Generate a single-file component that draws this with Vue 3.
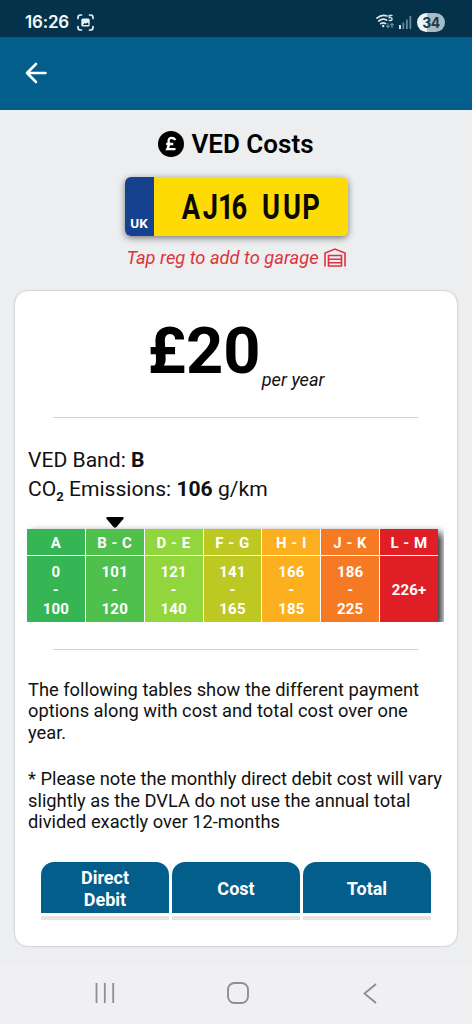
<script setup>
const bands = [
  { name: 'A', range: ['0', '-', '100'], color: '#36b554' },
  { name: 'B - C', range: ['101', '-', '120'], color: '#50c04d' },
  { name: 'D - E', range: ['121', '-', '140'], color: '#91d63c' },
  { name: 'F - G', range: ['141', '-', '165'], color: '#bec822' },
  { name: 'H - I', range: ['166', '-', '185'], color: '#fcb01f' },
  { name: 'J - K', range: ['186', '-', '225'], color: '#f67a24' },
  { name: 'L - M', range: ['226+'], color: '#e01e26' },
]
const columns = ['Direct Debit', 'Cost', 'Total']
</script>

<template>
  <div class="screen">
    <div class="status">
      <span class="time">16:26</span>
      <svg class="shot" width="17" height="17" viewBox="0 0 17 17" fill="none" stroke="#e8f1f6" stroke-width="1.7" stroke-linecap="round">
        <path d="M1 4.5V3.5Q1 1 3.5 1H4.5M12.500 1h1Q16 1 16 3.500v1M16 12.500v1Q16 16 13.500 16h-1M4.500 16h-1Q1 16 1 13.500v-1" />
        <rect x="4.300" y="4.600" width="8.400" height="7.800" rx="1.500" fill="#e8f1f6" stroke="none" />
        <path d="M5.800 11l2-2 1.200.8 1.200-1.300 1.300 1.300V11z" fill="#04324b" stroke="none" />
      </svg>
      <svg class="wifi" width="18" height="16" viewBox="0 0 18 16" fill="none" stroke="#dbe6ec" stroke-width="1.700" stroke-linecap="round">
        <path d="M1 4.200Q5.500.2 11 2M2.800 7Q6.500 4 10.500 6M4.800 9.700Q7 8 9.500 9.500" />
        <circle cx="7.200" cy="12" r="1.200" fill="#dbe6ec" stroke="none" />
        <path d="M16 1.500h-2.800v2.200q2.900-.5 2.900 1.400 0 1.900-3 1.200" stroke-width="1.300" />
        <path d="M12 9.500v4m-1.300-1.300L12 13.500l1.300-1.300M16 13.500v-4m-1.300 1.300L16 9.500l1.300 1.300" stroke="#7894a3" stroke-width="1.100" />
      </svg>
      <svg class="signal" width="13" height="13" viewBox="0 0 13 13">
        <rect x="0" y="9" width="2" height="4" fill="#dbe6ec" />
        <rect x="3.500" y="6.500" width="1.700" height="6.500" fill="#6f8c9b" />
        <rect x="7" y="3.500" width="1.700" height="9.500" fill="#6f8c9b" />
        <rect x="10.500" y="0" width="1.700" height="13" fill="#6f8c9b" />
      </svg>
      <span class="battery">34</span>
    </div>

    <header class="appbar">
      <svg width="22" height="22" viewBox="0 0 22 22" fill="none" stroke="#fff" stroke-width="2.600" stroke-linecap="round" stroke-linejoin="round">
        <path d="M20.500 11H2M11 2L2 11l9 9" />
      </svg>
    </header>

    <main class="content">
      <h1 class="title">
        <svg width="26" height="26" viewBox="0 0 26 26">
          <circle cx="13" cy="13" r="13" fill="#000" />
          <path d="M17.200 9.200Q16.300 6.800 13.600 6.800 10.500 6.800 10.600 10.200 11.600 14.500 9.300 18.200H17.500M8.200 13H15.300" fill="none" stroke="#fff" stroke-width="2.300" />
        </svg>
        <span>VED Costs</span>
      </h1>

      <div class="plate">
        <div class="plate-uk">UK</div>
        <div class="plate-reg">
          <svg width="194" height="58" viewBox="0 0 194 58">
            <text transform="translate(0 41.500) scale(.78 1)" x="35.500 62.500 82 99.500 122 138.500 165.500 190">AJ16 UUP</text>
          </svg>
        </div>
      </div>

      <div class="tap">
        <span>Tap reg to add to garage</span>
        <svg width="22" height="19" viewBox="0 0 22 19" fill="none" stroke="#dc3340" stroke-width="1.600">
          <path d="M1 18.500V5L11 1l10 4v13.500M4.500 18.500V7.500h13v11M4.500 11.200h13M4.500 14.700h13M4.500 18h13" />
        </svg>
      </div>

      <section class="card">
        <div class="price"><strong>£20</strong><em>per year</em></div>
        <hr />
        <div class="facts">
          <div class="band-line">VED Band: <b>B</b></div>
          <div class="co-line">CO<small>2</small> Emissions: <b>106</b> g/km</div>
        </div>

        <div class="scale">
          <svg class="marker" width="18" height="11" viewBox="0 0 18 11"><path d="M1.500 0h15q2 .4.800 2L10.500 10q-1.500 1.500-3 0L.700 2Q-.5.400 1.500 0z" /></svg>
          <div class="bands">
            <div v-for="b in bands" :key="b.name" class="band">
              <div class="band-name" :style="{ background: b.color }">{{ b.name }}</div>
              <div class="band-range" :style="{ background: b.color }">
                <span v-for="(r, i) in b.range" :key="i">{{ r }}</span>
              </div>
            </div>
          </div>
        </div>
        <hr />

        <div class="copy">
          <p>The following tables show the different payment<br />options along with cost and total cost over one<br />year.</p>
          <p>* Please note the monthly direct debit cost will vary<br />slightly as the DVLA do not use the annual total<br />divided exactly over 12-months</p>
        </div>

        <div class="table">
          <div v-for="c in columns" :key="c" class="col">
            <div class="th"><span>{{ c }}</span></div>
            <div class="row"></div>
          </div>
        </div>
      </section>
    </main>

    <nav class="nav">
      <svg width="20" height="20" viewBox="0 0 20 20" stroke="#8f8f92" stroke-width="1.800"><path d="M1.500 0v20M9.800 0v20M18.200 0v20" /></svg>
      <svg width="22" height="22" viewBox="0 0 22 22" fill="none" stroke="#8f8f92" stroke-width="1.900"><rect x="1" y="1" width="20" height="20" rx="6.500" /></svg>
      <svg width="14" height="21" viewBox="0 0 14 21" fill="none" stroke="#8f8f92" stroke-width="1.900"><path d="M13 1L1.500 10.500 13 20" /></svg>
    </nav>
  </div>
</template>

<style scoped>
.screen {
  width: 472px;
  height: 1024px;
  overflow: hidden;
  display: flex;
  flex-direction: column;
  background: #edeef0;
  font-family: Roboto, "Liberation Sans", sans-serif;
  color: #111;
}
.status {
  height: 37px;
  flex: none;
  box-sizing: border-box;
  padding: 7px 27px 0 25px;
  display: flex;
  align-items: center;
  background: #04324b;
  color: #f2f8fb;
}
.time { font: 600 17px/20px Inter, sans-serif; width: 52px; white-space: nowrap; letter-spacing: -.2px; }
.shot { margin-top: 1px; }
.wifi { margin-left: auto; }
.signal { margin-left: 5px; margin-right: 5px; }
.battery {
  width: 28px;
  height: 19px;
  border-radius: 10px;
  background: linear-gradient(90deg, #eef5f8 34%, #a9bac7 34%);
  color: #1a3a4f;
  font: 700 14px/19px Inter, sans-serif;
  letter-spacing: -.6px;
  text-align: center;
}
.appbar {
  height: 73px;
  flex: none;
  box-sizing: border-box;
  padding: 0 0 2px 25px;
  display: flex;
  align-items: center;
  background: #035e8b;
}
.content { height: 856px; display: flex; flex-direction: column; align-items: center; }
.title {
  margin: 20px 0 0;
  height: 28px;
  display: flex;
  align-items: center;
  gap: 7px;
  font-size: 26px;
  line-height: 28px;
  font-weight: 600;
  color: #000;
}
.plate {
  margin-top: 19px;
  width: 223px;
  height: 59px;
  display: flex;
  border-radius: 6px;
  overflow: hidden;
  box-shadow: 0 2px 7px rgba(0, 0, 0, .5);
}
.plate-uk {
  width: 29px;
  box-sizing: border-box;
  padding-top: 38px;
  background: #15418e;
  color: #fff;
  font-size: 13.500px;
  line-height: 16px;
  font-weight: 700;
  text-align: center;
}
.plate-reg { flex: 1; background: #ffdb06; }
.plate-reg svg { display: block; }
.plate-reg text { font-size: 35px; font-weight: 700; white-space: pre; fill: #0b0a02; }
.tap {
  margin-top: 11px;
  height: 21px;
  display: flex;
  align-items: center;
  gap: 5px;
  color: #dc3340;
  font-size: 18.300px;
  line-height: 21px;
  font-style: italic;
  white-space: nowrap;
}
.card {
  margin-top: 22px;
  width: 444px;
  height: 657px;
  box-sizing: border-box;
  border: 1px solid #d7d7da;
  border-radius: 14px;
  background: #fff;
  padding: 0 12px;
  box-shadow: 0 0 2px rgba(0, 0, 0, .08);
}
.price { height: 126px; display: flex; justify-content: center; align-items: flex-start; color: #000; }
.price strong { margin-top: 27px; font-size: 65px; line-height: 66px; }
.price em { margin: 78px 0 0 1px; font-size: 18.200px; line-height: 21px; color: #111; }
hr { width: 365px; height: 1px; margin: 0 0 0 26px; border: 0; background: #d2d2d4; }
.facts { margin: 27px 0 0 1px; height: 72px; font-size: 21.100px; line-height: 29px; white-space: nowrap; }
.facts small { font-size: 13px; line-height: 1; font-weight: 700; position: relative; top: 5px; }
.scale { width: 417px; height: 105px; overflow: hidden; }
.marker { display: block; margin: 0 0 0 79px; }
.bands {
  display: grid;
  grid-template-columns: repeat(7, 1fr);
  gap: 1px;
  width: 411px;
  height: 94px;
  margin-top: 1px;
  background: rgba(255, 255, 255, .95);
  box-shadow: 4px 4px 8px rgba(0, 0, 0, .85);
}
.band { display: flex; flex-direction: column; gap: 1px; color: #fff; font-weight: 700; text-align: center; font-size: 15px; }
.band-name { height: 26px; line-height: 28px; letter-spacing: .5px; }
.band-range { flex: 1; padding-top: 2px; display: flex; flex-direction: column; justify-content: center; line-height: 18.400px; letter-spacing: .2px; }
.scale + hr { margin-top: 27px; }
.copy { margin: 29px 0 0 1px; font-size: 18.300px; line-height: 21.400px; white-space: nowrap; }
.copy p { margin: 0 0 25px; }
.table { display: grid; grid-template-columns: repeat(3, 128px); gap: 3px; margin: 30px 0 0 14px; }
.th {
  height: 51px;
  box-sizing: border-box;
  padding-top: 2px;
  display: flex;
  align-items: center;
  justify-content: center;
  border-radius: 13px 13px 0 0;
  background: #035e8b;
  color: #fff;
  font-size: 18px;
  line-height: 21.500px;
  font-weight: 700;
  text-align: center;
}
.th span { max-width: 60px; }
.row { height: 4px; margin-top: 3px; background: #e7e5e3; }
.nav {
  height: 58px;
  flex: none;
  background: #f0f0f2;
  display: flex;
  align-items: center;
  padding: 0 95px 4px;
  justify-content: space-between;
  box-sizing: border-box;
}
.nav svg:nth-child(2) { margin-left: -3px; }
</style>
